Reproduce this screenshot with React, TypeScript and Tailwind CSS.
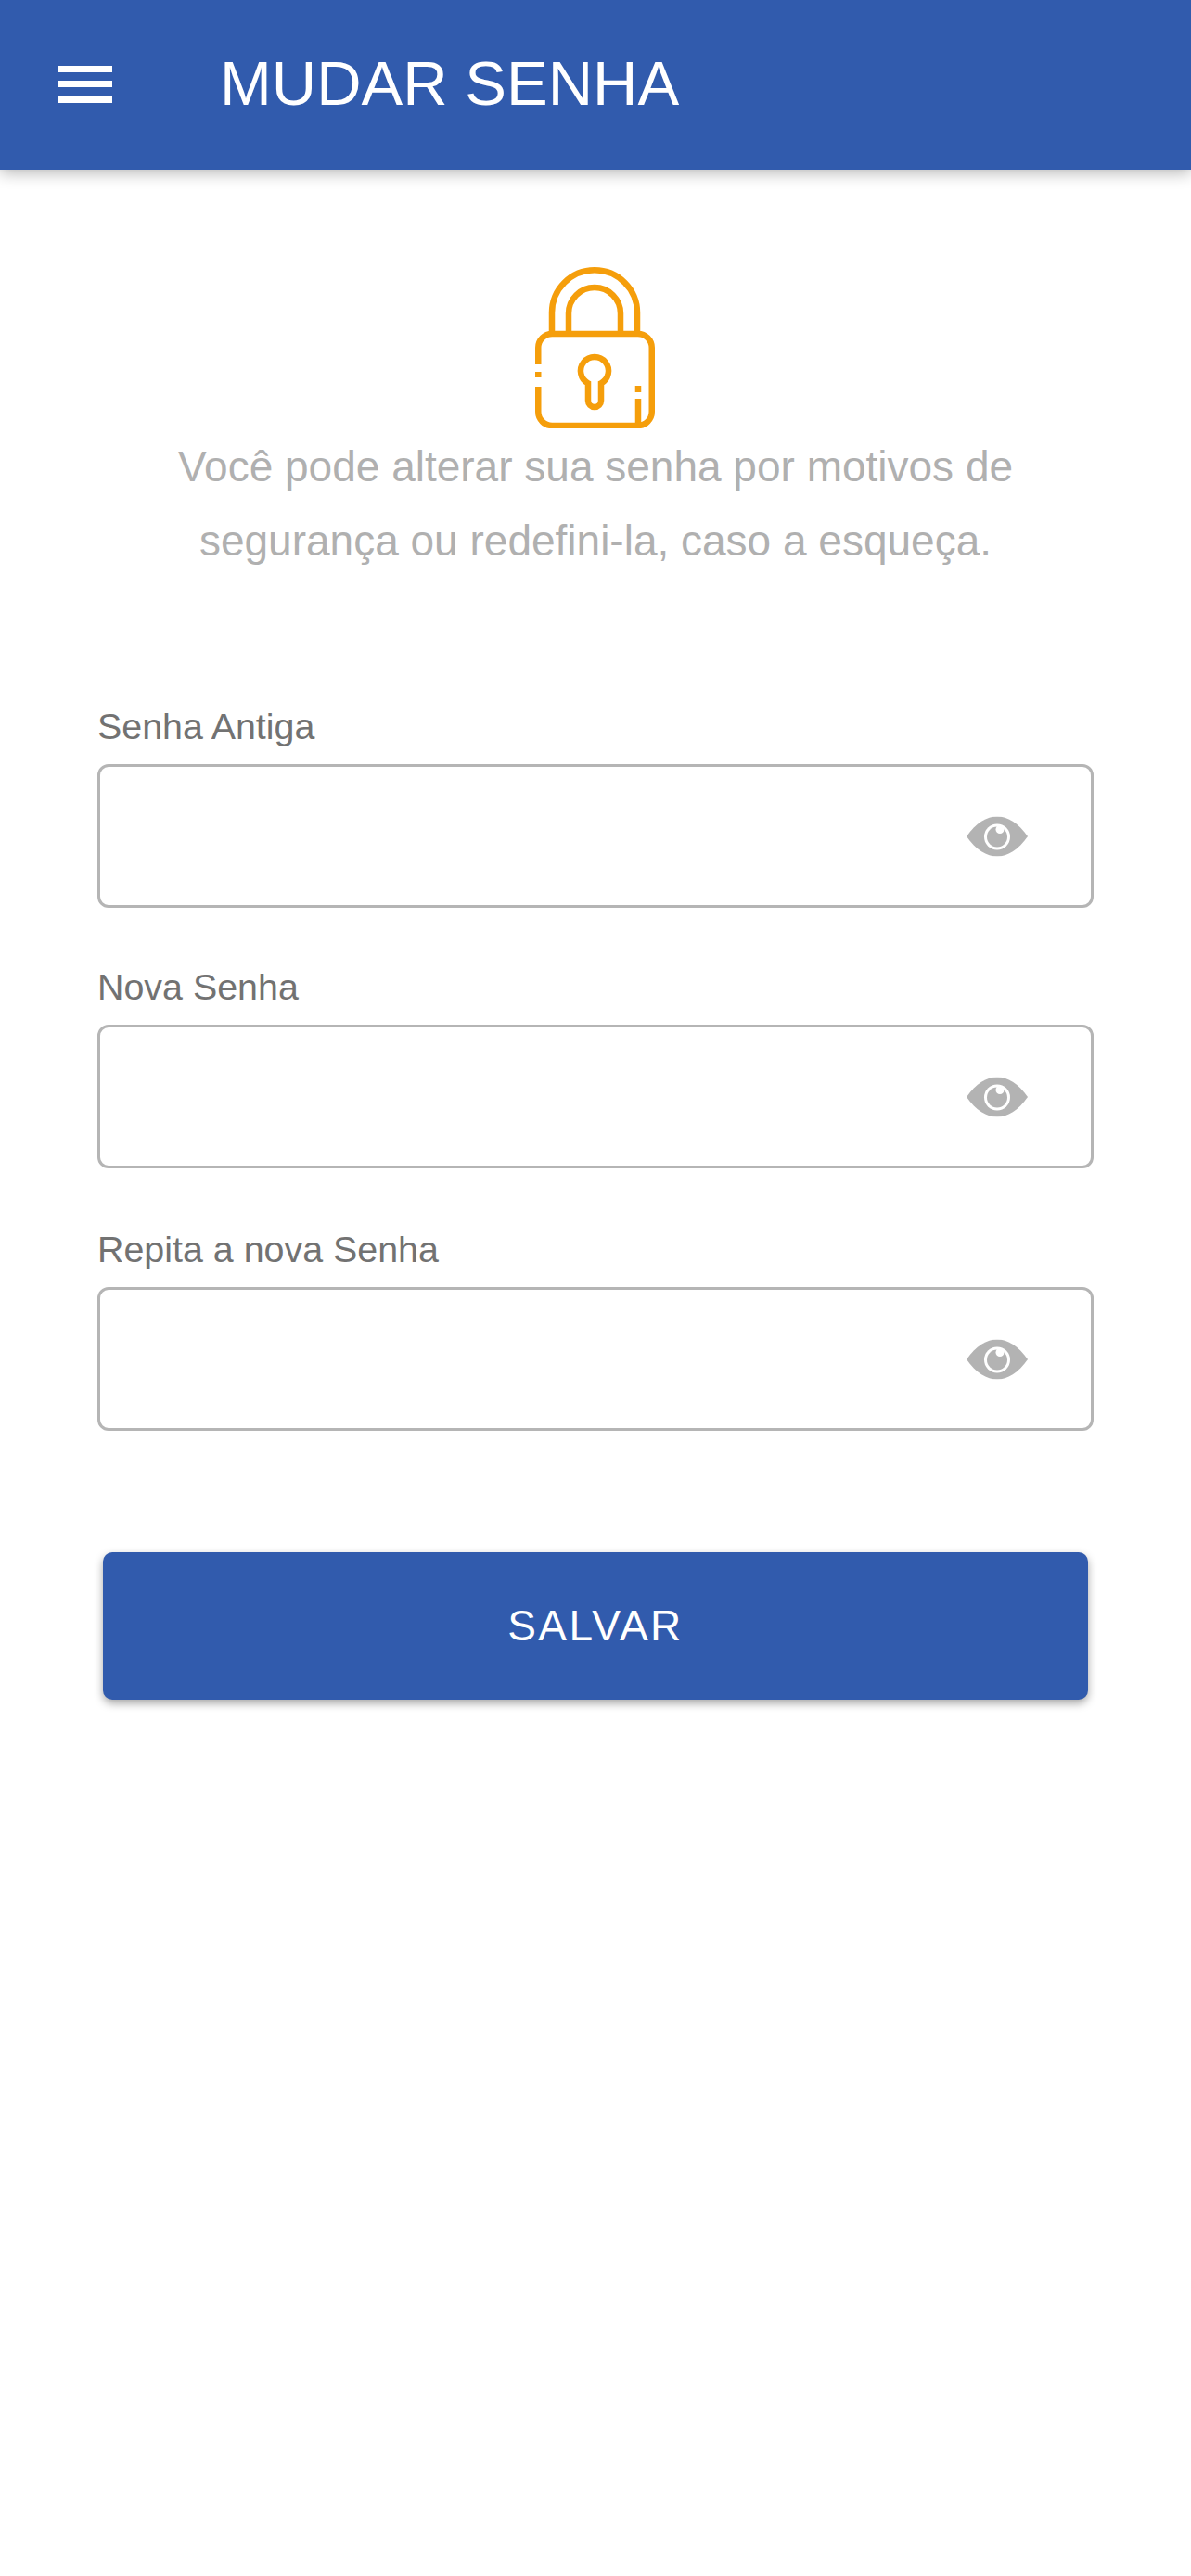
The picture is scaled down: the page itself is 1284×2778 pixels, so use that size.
const fontStack = "font-['Liberation_Sans',Arial,sans-serif]";

function LockIcon() {
  return (
    <svg width="129" height="174" viewBox="0 0 129 174" fill="none" stroke="#f59e0b" strokeWidth="6.5" className="block">
      <path d="M18 72V49.25a46 46 0 0 1 92 0V72" />
      <path d="M36 72V50a28 28 0 0 1 56 0V72" />
      <path d="M3.25 105V87a15 15 0 0 1 15-15h92.5a15 15 0 0 1 15 15v69a15 15 0 0 1-15 15h-92.5a15 15 0 0 1-15-15v-27" />
      <path d="M3.25 113v6" />
      <path d="M111 142v26" />
      <path d="M111 128v7" />
      <path d="M57 125.3a15 15 0 1 1 14 0V144a7 7 0 0 1-14 0z" />
    </svg>
  );
}

function EyeIcon() {
  return (
    <svg width="66" height="43" viewBox="0 0 66 43" className="block">
      <path d="M0 21.5C10 7 22 0 33 0s23 7 33 21.5C56 36 44 43 33 43S10 36 0 21.5z" fill="#b3b3b3" />
      <circle cx="33" cy="22" r="14" fill="#fff" />
      <circle cx="33" cy="22" r="11" fill="#b3b3b3" />
      <circle cx="36" cy="14" r="4.5" fill="#fff" />
    </svg>
  );
}

function PasswordField({ label, className }: { label: string; className?: string }) {
  return (
    <div className={className}>
      <label className="block text-[39.4px] leading-[46px] text-[#727272] mb-[18px]">{label}</label>
      <div className="relative">
        <input
          type="password"
          className="block w-full h-[155px] rounded-[12px] border-[3.5px] border-[#b5b5b5] bg-white outline-none"
        />
        <span className="absolute right-[71px] top-1/2 -translate-y-1/2">
          <EyeIcon />
        </span>
      </div>
    </div>
  );
}

export default function App() {
  return (
    <div className={`${fontStack} min-h-[2778px] bg-white`}>
      <header className="flex items-center h-[183px] bg-[#315bad] shadow-[0_3px_16px_rgba(0,0,0,0.3)]">
        <button className="flex flex-col gap-[9.5px] ml-[62px] mb-[2px] w-[59px]">
          <span className="block h-[7px] bg-white" />
          <span className="block h-[7px] bg-white" />
          <span className="block h-[7px] bg-white" />
        </button>
        <h1 className="ml-[116px] mb-[5px] text-[67px] leading-none font-normal text-white">MUDAR SENHA</h1>
      </header>

      <main className="flex flex-col items-center">
        <div className="mt-[105px] mr-[2px]">
          <LockIcon />
        </div>
        <p className="mt-[1px] text-center text-[46px] leading-[80px] text-[#b0b0b0]">
          Você pode alterar sua senha por motivos de
          <br />
          segurança ou redefini-la, caso a esqueça.
        </p>

        <form className="w-full px-[105px] mt-[137px]">
          <PasswordField label="Senha Antiga" />
          <PasswordField label="Nova Senha" className="mt-[62px]" />
          <PasswordField label="Repita a nova Senha" className="mt-[64px]" />
          <div className="px-[6px] mt-[131px]">
            <button
              type="button"
              className="block w-full h-[159px] rounded-[10px] bg-[#315bad] text-[46px] tracking-[2.5px] text-white shadow-[0_4px_10px_rgba(0,0,0,0.35)]"
            >
              SALVAR
            </button>
          </div>
        </form>
      </main>
    </div>
  );
}
